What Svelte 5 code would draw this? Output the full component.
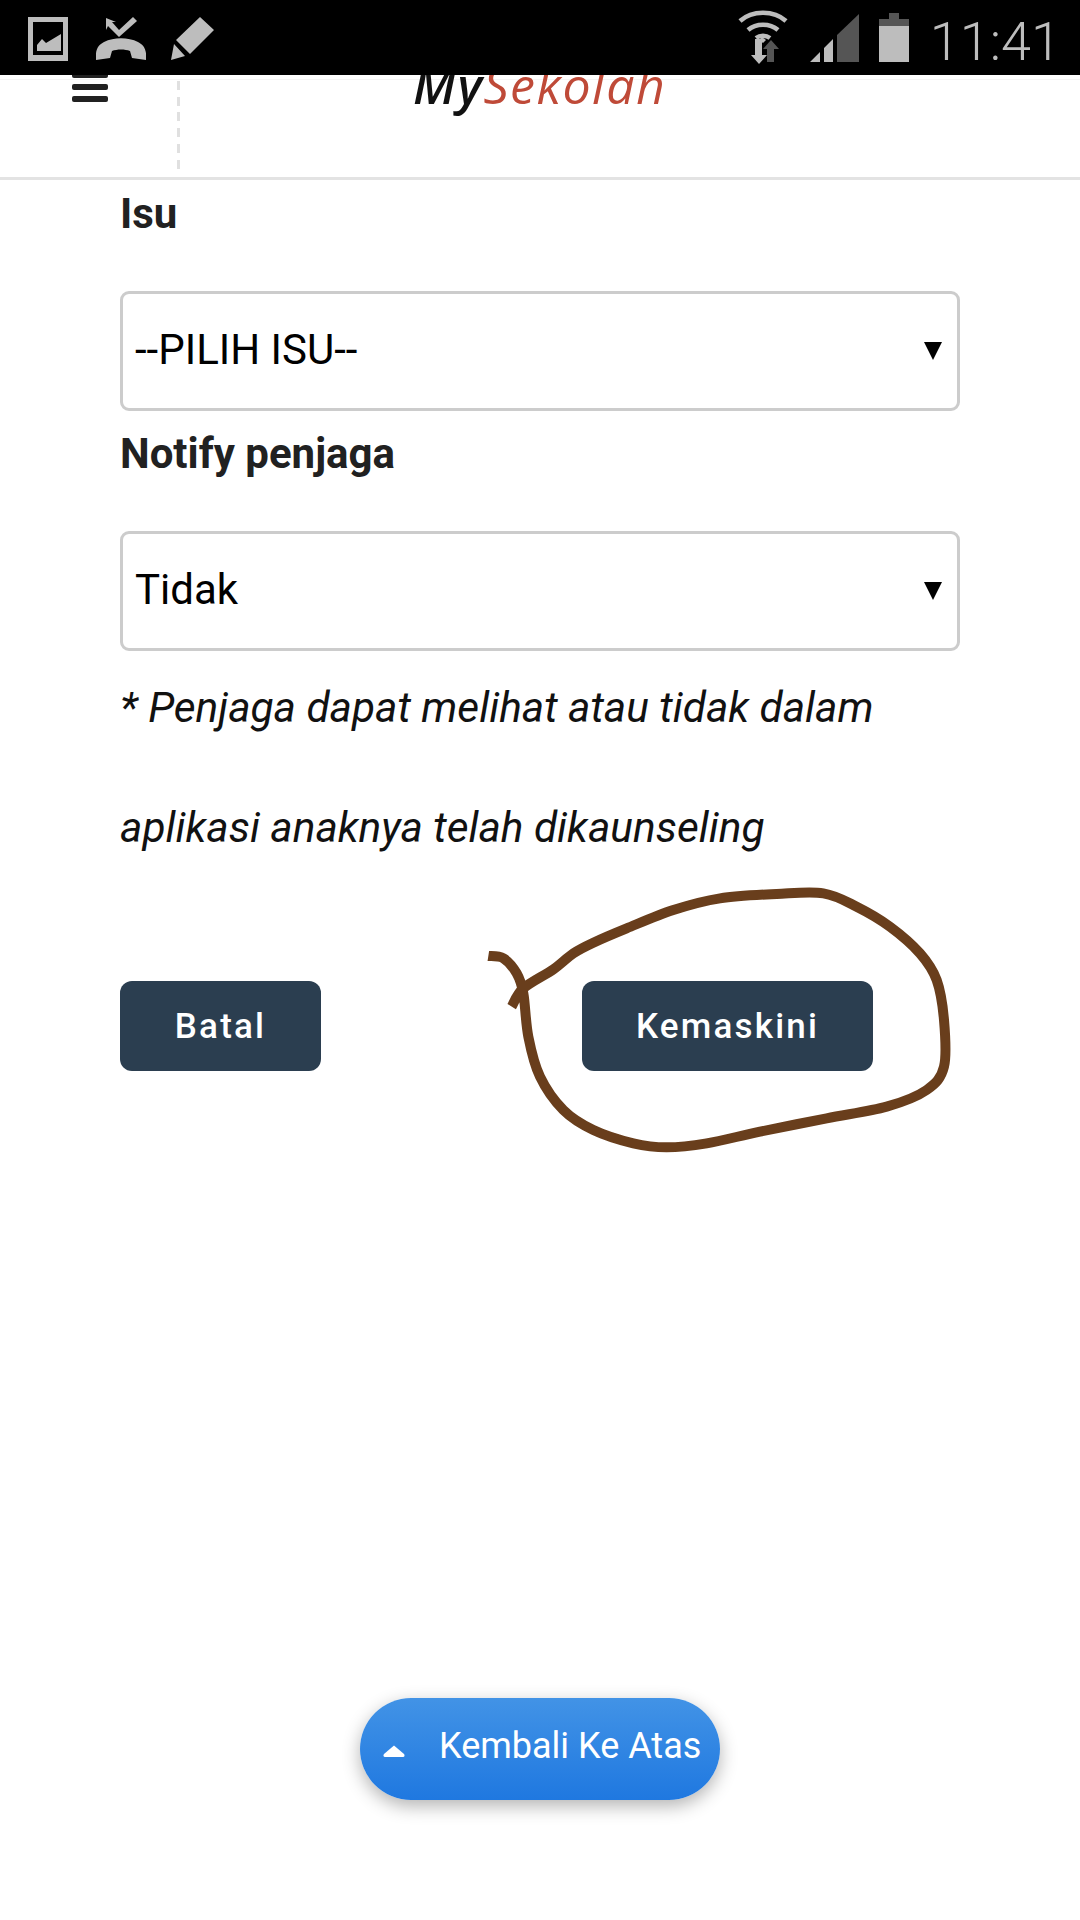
<script>
  const pts = [[85,258],[130,265],[170,310],[190,370],[205,500],[240,620],[310,720],[400,780],[520,820],[620,832],[740,820],[900,785],[1100,745],[1280,710],[1400,660],[1452,590],[1452,450],[1430,330],[1380,250],[1290,170],[1190,110],[1090,70],[950,72],[780,85],[640,120],[500,175],[400,218],[340,250],[280,298],[190,355],[155,410]];
  function smooth(p) {
    let d = `M${p[0][0]} ${p[0][1]}`;
    for (let i = 0; i < p.length - 1; i++) {
      const a = p[Math.max(i - 1, 0)], b = p[i], c = p[i + 1], e = p[Math.min(i + 2, p.length - 1)];
      const c1 = [b[0] + (c[0] - a[0]) / 6, b[1] + (c[1] - a[1]) / 6];
      const c2 = [c[0] - (e[0] - b[0]) / 6, c[1] - (e[1] - b[1]) / 6];
      d += `C${c1[0]} ${c1[1]} ${c2[0]} ${c2[1]} ${c[0]} ${c[1]}`;
    }
    return d;
  }
  const scribble = smooth(pts);
</script>

<div class="page">
  <div class="status">
    <div class="status-left">
      <svg width="42" height="46" viewBox="0 0 42 46">
        <path fill="#bdbdbd" fill-rule="evenodd" d="M0 2h40v44H0zM5 7v33h30V7z" />
        <path fill="#bdbdbd" d="M9 36v-6l5-6 4 4 15-9v17z" />
      </svg>
      <svg class="call" width="50" height="44" viewBox="0 0 50 44">
        <path fill="#bdbdbd" d="M0 43c-1-10 2-15 8-18 10-5 24-5 34 0 6 3 9 8 8 18l-14-2-2-7c-5-2-13-2-18 0l-2 7z" />
        <path fill="#bdbdbd" d="M10 1l10 4-4 0 7 8 14-13 4 4-18 16-11-11-2 4z" />
      </svg>
      <svg width="44" height="44" viewBox="0 0 44 44">
        <path fill="#bdbdbd" d="M29 0l14 13-24 24-14-14zM3 27l11 12-14 4z" />
      </svg>
    </div>
    <div class="status-right">
      <svg class="wifi" width="50" height="54" viewBox="0 0 50 54">
        <g fill="none" stroke="#bdbdbd" stroke-width="4.5">
          <path d="M2 11C14 0 36 0 48 11" />
          <path d="M10 20c8-7 22-7 30 0" />
          <path d="M18 28c4-3 10-3 14 0" />
        </g>
        <path fill="#bdbdbd" d="M21 30l4 3 3-3-4-3z" />
        <path fill="#bdbdbd" d="M17 35h7v16h5l-8 9-8-9h4z" transform="translate(0 -6)" />
        <path fill="#555" d="M33 31l8 9h-5v13h-7V40h-4z" transform="translate(0 -1)" />
      </svg>
      <svg class="signal" width="50" height="50" viewBox="0 0 50 50">
        <path fill="#bdbdbd" d="M0 48l10-10v10zM14 48V34l9-9v23z" />
        <path fill="#555" d="M27 48V21L49 0v48z" />
      </svg>
      <svg class="battery" width="30" height="49" viewBox="0 0 30 49">
        <path fill="#555" d="M10 0h10v6h10v7H0V6h10z" />
        <path fill="#bdbdbd" d="M0 13h30v36H0z" />
      </svg>
      <span class="time">11:41</span>
    </div>
  </div>

  <header class="header">
    <div class="menu-cell">
      <svg class="burger" width="36" height="30" viewBox="0 0 36 30">
        <rect y="0" width="36" height="6" rx="2" />
        <rect y="12" width="36" height="6" rx="2" />
        <rect y="24" width="36" height="6" rx="2" />
      </svg>
    </div>
    <div class="logo"><span class="my">My</span><span class="sek">Sekolah</span></div>
  </header>

  <main class="form">
    <div class="label">Isu</div>
    <div class="select">
      <span>--PILIH ISU--</span>
      <svg width="18" height="18" viewBox="0 0 18 18"><path d="M0 0h18L9 18z" /></svg>
    </div>
    <div class="label">Notify penjaga</div>
    <div class="select">
      <span>Tidak</span>
      <svg width="18" height="18" viewBox="0 0 18 18"><path d="M0 0h18L9 18z" /></svg>
    </div>
    <p class="note">* Penjaga dapat melihat atau tidak dalam<br />aplikasi anaknya telah dikaunseling</p>
    <div class="actions">
      <button class="btn batal">Batal</button>
      <button class="btn kemas">Kemaskini</button>
    </div>
  </main>

  <svg class="scribble" width="510" height="300" viewBox="0 0 1530 900">
    <path d={scribble} fill="none" stroke="#693e1c" stroke-width="30" />
  </svg>

  <button class="top">
    <svg width="22" height="12" viewBox="0 0 22 12"><path d="M11 .5L21 9c1 1 .6 3-1 3H2C.4 12 0 10 1 9z" /></svg>
    <span>Kembali Ke Atas</span>
  </button>
</div>

<style>
  :global(body) {
    margin: 0;
    background: #fff;
  }
  .page {
    position: relative;
    width: 1080px;
    height: 1920px;
    overflow: hidden;
    background: #fff;
    font-family: Roboto, sans-serif;
    color: #212121;
  }
  .status {
    position: relative;
    z-index: 2;
    height: 75px;
    background: #000;
    display: flex;
    justify-content: space-between;
    align-items: flex-start;
  }
  .status-left {
    display: flex;
    align-items: flex-start;
    padding: 15px 0 0 28px;
  }
  .call {
    margin: 2px 0 0 26px;
  }
  .status-left svg:last-child {
    margin: 2px 0 0 25px;
  }
  .status-right {
    display: flex;
    align-items: flex-start;
    padding-right: 19px;
  }
  .wifi {
    margin-top: 10px;
  }
  .signal {
    margin: 14px 0 0 22px;
  }
  .battery {
    margin: 13px 0 0 19px;
  }
  .time {
    margin-left: 21px;
    margin-top: 11px;
    font-size: 54px;
    line-height: 62px;
    font-weight: 300;
    color: #bdbdbd;
  }
  .header {
    position: relative;
    height: 105px;
    box-sizing: border-box;
    border-bottom: 3px solid #e3e3e3;
    display: flex;
    background: linear-gradient(#f4f4f4, #f4f4f4) 0 4px / 100% 1px no-repeat;
  }
  .menu-cell {
    width: 177px;
    height: 90px;
    margin-top: 6px;
    background: repeating-linear-gradient(#e0e0e0 0 9px, transparent 9px 15.7px) right top / 3px 100% no-repeat;
    padding-right: 3px;
  }
  .burger {
    display: block;
    margin: -9px 0 0 72px;
    fill: #212121;
  }
  .logo {
    margin: -20px 0 0 233px;
    font-family: "Open Sans", sans-serif;
    font-style: italic;
    font-size: 50px;
    line-height: 60px;
    height: 60px;
    letter-spacing: 1.5px;
  }
  .my {
    color: #111;
    font-weight: 600;
  }
  .sek {
    color: #bf4a38;
    font-weight: 400;
  }
  .form {
    margin-top: -9px;
    padding: 0 120px;
  }
  .label {
    height: 84px;
    line-height: 86px;
    margin-bottom: 36px;
    font-size: 42px;
    font-weight: 700;
  }
  .select {
    height: 120px;
    box-sizing: border-box;
    border: 3px solid #ccc;
    border-radius: 9px;
    display: flex;
    align-items: center;
    justify-content: space-between;
    padding: 0 15px 0 12px;
    font-size: 42px;
    color: #000;
  }
  .select span {
    margin-top: -3px;
  }
  .select svg {
    fill: #000;
  }
  .note {
    margin: -3px 0 0;
    font-size: 42.4px;
    line-height: 120px;
    font-style: italic;
    color: #111;
  }
  .actions {
    display: flex;
    gap: 261px;
    margin-top: 93px;
  }
  .btn {
    height: 90px;
    border: 0;
    border-radius: 12px;
    background: #2b3e50;
    color: #fff;
    font-family: inherit;
    font-size: 35px;
    font-weight: 500;
    letter-spacing: 2.2px;
    padding: 0;
  }
  .batal {
    width: 201px;
  }
  .kemas {
    width: 291px;
  }
  .scribble {
    position: absolute;
    left: 460px;
    top: 870px;
  }
  .top {
    position: absolute;
    left: 360px;
    top: 1698px;
    width: 360px;
    height: 102px;
    border: 0;
    border-radius: 51px;
    background: linear-gradient(#4293e6, #1f78e0);
    box-shadow: 0 6px 18px rgba(0, 0, 0, 0.3);
    color: #fff;
    font-family: inherit;
    font-size: 36px;
    display: flex;
    align-items: center;
    padding: 0 0 0 23px;
  }
  .top svg {
    fill: #fff;
    margin-top: 4px;
  }
  .top span {
    margin-left: 34px;
    margin-top: -6px;
    white-space: nowrap;
  }
</style>
